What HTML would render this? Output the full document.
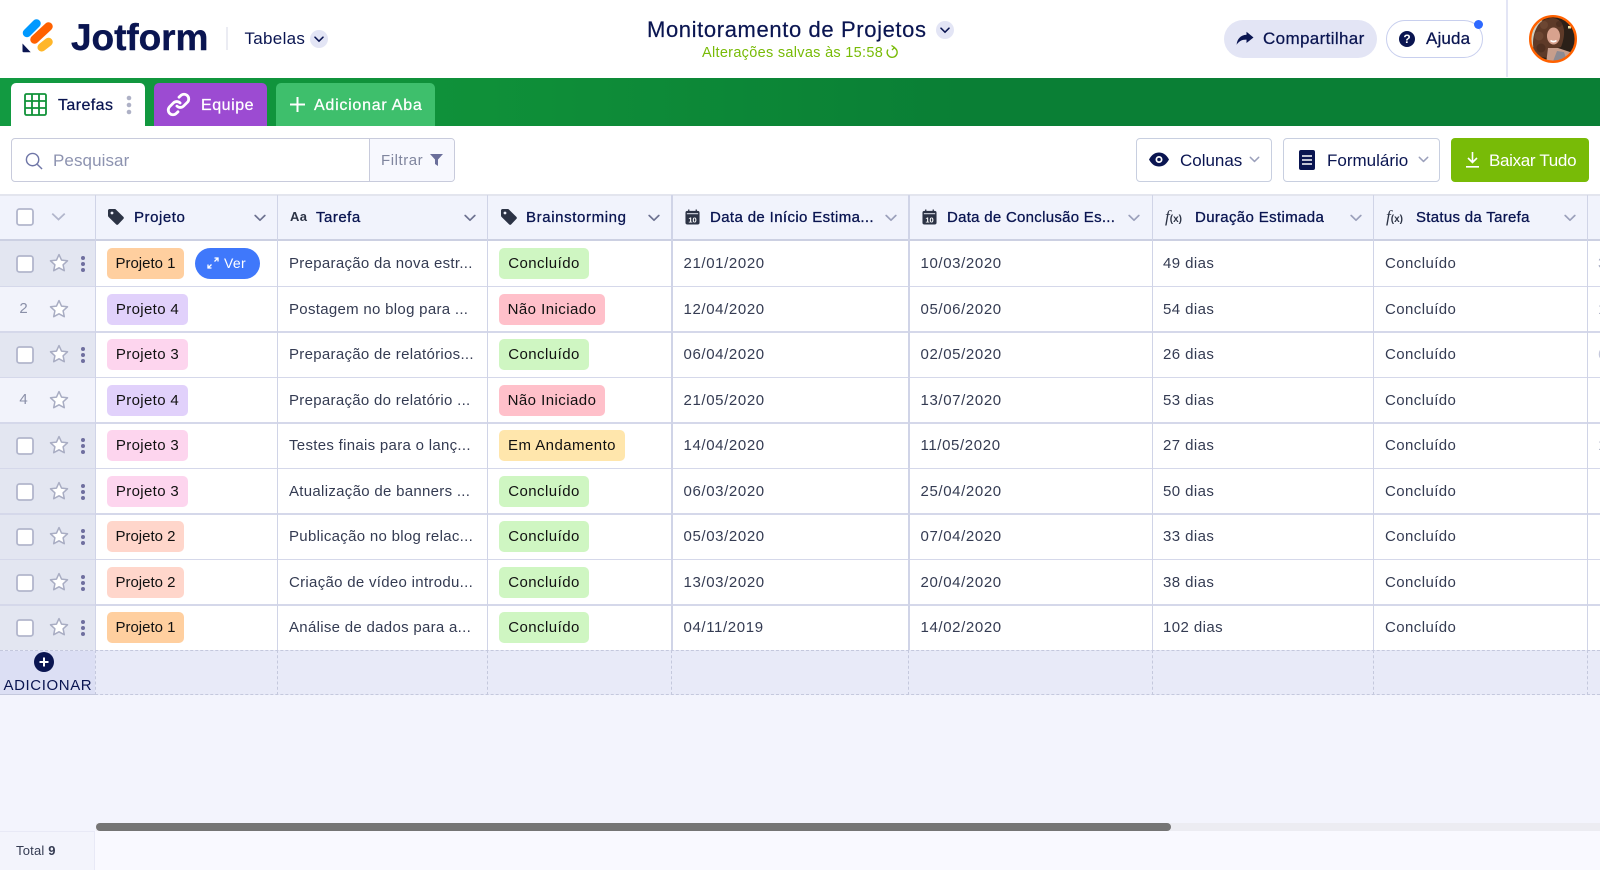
<!DOCTYPE html>
<html lang="pt"><head><meta charset="utf-8"><title>Monitoramento de Projetos</title>
<style>
html,body{margin:0;padding:0;width:1600px;height:870px;overflow:hidden;background:#f3f4fd;font-family:"Liberation Sans",sans-serif;color:#0a1551}
*{box-sizing:border-box}
.a,.t,.r,.r>*{position:absolute}
.t{white-space:nowrap;line-height:20px}
.m{-webkit-text-stroke:.25px currentColor}
.h{top:208px;font-size:15px;letter-spacing:.55px;-webkit-text-stroke:.3px #0a1551}
.r{left:0;width:1600px;height:46px;top:calc(241px + var(--i)*45.55px)}
.l{left:0;top:0;width:95px;height:46px;background:#e3e6f1}
.l.p{background:#f2f3fb}
.n{left:16px;top:12px;width:15px;font-size:15px;line-height:20px;color:#8a8fa8;text-align:center}
.tag{top:7px;height:31px;line-height:31px;border-radius:5px;font-size:15px;letter-spacing:.45px;color:#111;text-align:center;white-space:nowrap}
.c{top:13px;font-size:15px;line-height:20px;letter-spacing:.42px;color:#343b52;white-space:nowrap}
.x{left:289px;letter-spacing:.3px}
.y{letter-spacing:.62px}
.y1{left:683.500px}.y2{left:920.500px}
.p1{left:107px;width:77px;background:#ffcf9f;letter-spacing:0}.p2{left:107px;width:77px;background:#ffd6cb;letter-spacing:0}.p3{left:107px;width:81px;background:#fdd5ee;letter-spacing:.35px}.p4{left:107px;width:81px;background:#e1d1fb;letter-spacing:.35px}
.ok{left:499px;width:90px;background:#cff6c2}.no{left:499px;width:106px;background:#ffc0ca}.em{left:499px;width:126px;background:#ffe6ac}
.v{background:#d0d4e7;width:1.500px;top:195px;height:455px}
.hl{left:0;width:1600px;height:1.500px;background:#d5d8ea;top:calc(285.500px + var(--i)*45.55px)}
.d{top:650px;height:45px;border-left:1.500px dashed #c4c8dd;width:0}
</style></head><body>
<svg width="0" height="0" style="position:absolute"><defs>
<symbol id="star" viewBox="0 0 20 20"><path d="M10 1.600l2.500 5.500 6 .7-4.400 4 1.200 5.900L10 14.800l-5.300 2.900 1.200-5.900-4.400-4 6-.7z" fill="#fff" stroke="#a9adc3" stroke-width="1.500" stroke-linejoin="round"/></symbol>
<symbol id="box" viewBox="0 0 18 18"><rect x="1" y="1" width="16" height="16" rx="2.500" fill="#fff" stroke="#b2b6cc" stroke-width="1.800"/></symbol>
<symbol id="dots" viewBox="0 0 6 18"><g fill="#6f6f9f"><circle cx="3" cy="3" r="2"/><circle cx="3" cy="9" r="2"/><circle cx="3" cy="15" r="2"/></g></symbol>
<symbol id="chev" viewBox="0 0 12 8"><path d="M1.200 1.500L6 6.200l4.800-4.700" fill="none" stroke="#6c7190" stroke-width="1.700" stroke-linecap="round" stroke-linejoin="round"/></symbol>
<symbol id="chevl" viewBox="0 0 12 8"><path d="M1.200 1.500L6 6.200l4.800-4.700" fill="none" stroke="#9ba0bb" stroke-width="1.700" stroke-linecap="round" stroke-linejoin="round"/></symbol>
<symbol id="tagi" viewBox="0 0 16 16"><path d="M0 1.500C0 .7.7 0 1.500 0h5.200c.5 0 1 .2 1.300.6l7.400 7.300c.6.6.6 1.500 0 2l-5.200 5.500c-.6.6-1.500.6-2.100 0L.6 8C.2 7.600 0 7.100 0 6.600z" fill="#2c3345"/><circle cx="4" cy="4" r="1.400" fill="#f1f3fc"/></symbol>
<symbol id="cal" viewBox="0 0 16 16"><path d="M4 0v3M12 0v3" stroke="#2c3345" stroke-width="1.400"/><rect x="0.500" y="1.500" width="15" height="14.500" rx="2" fill="#2c3345"/><rect x="2" y="4" width="12" height="1" fill="#f1f3fc"/><text x="8" y="14" font-size="8" font-weight="700" text-anchor="middle" fill="#fff" font-family="Liberation Sans">10</text></symbol>
</defs></svg>

<!-- header -->
<div class="a" style="left:0;top:0;width:1600px;height:78px;background:#fff"></div>
<svg class="a" style="left:18px;top:16px" width="38" height="40" viewBox="18 16 38 40">
<path d="M27 33L36.500 23.500" stroke="#0099ff" stroke-width="8.500" stroke-linecap="round"/>
<path d="M34.500 39.500L48.500 26.500" stroke="#ff6100" stroke-width="8.500" stroke-linecap="round"/>
<path d="M41.700 47.300L48.500 42" stroke="#ffb629" stroke-width="8.500" stroke-linecap="round"/>
<path d="M22.500 43.500L30.700 52.300H23.500q-1 0-1-1z" fill="#0a1551"/></svg>
<div class="t" style="left:71px;top:16.500px;line-height:42px;font-size:37px;font-weight:700;color:#0a1551;letter-spacing:-.05px;-webkit-text-stroke:.4px #0a1551">Jotform</div>
<div class="a" style="left:226px;top:27px;width:1.500px;height:23px;background:#ebecf3"></div>
<div class="t" style="left:244.500px;top:29px;font-size:17px;letter-spacing:.3px">Tabelas</div>
<div class="a" style="left:310px;top:30px;width:18px;height:18px;border-radius:50%;background:#e3e5f5"></div>
<svg class="a" style="left:314px;top:36px" width="10" height="7"><path d="M1 1.200L5 5.200 9 1.200" fill="none" stroke="#0a1551" stroke-width="1.500" stroke-linecap="round"/></svg>

<div class="t" style="left:647px;top:18px;line-height:24px;font-size:22px;letter-spacing:.62px;-webkit-text-stroke:.2px #0a1551">Monitoramento de Projetos</div>
<div class="a" style="left:936px;top:21px;width:18px;height:18px;border-radius:50%;background:#e3e5f5"></div>
<svg class="a" style="left:940px;top:27px" width="10" height="7"><path d="M1 1.200L5 5.200 9 1.200" fill="none" stroke="#0a1551" stroke-width="1.500" stroke-linecap="round"/></svg>
<div class="t" style="left:702px;top:43px;font-size:14.500px;letter-spacing:.3px;color:#78bb07">Alterações salvas às 15:58</div>
<svg class="a" style="left:885px;top:45px" width="14" height="15" viewBox="0 0 14 15"><path d="M8.500 2.500A5 5 0 1 1 3 4.500" fill="none" stroke="#78bb07" stroke-width="1.400"/><path d="M6.500 .5L9.500 2.500 7 5" fill="none" stroke="#78bb07" stroke-width="1.300"/></svg>

<div class="a" style="left:1224px;top:20px;width:153px;height:38px;border-radius:19px;background:#e3e5f5"></div>
<svg class="a" style="left:1236px;top:31px" width="18" height="15" viewBox="0 0 18 15"><path d="M10.500 .8L17.500 6.500 10.500 12V8.600C6 8.500 3 10 .6 13.800 1.200 8 4.500 4.200 10.500 3.800z" fill="#0a1551"/></svg>
<div class="t m" style="left:1263px;top:29px;font-size:17px;letter-spacing:.36px">Compartilhar</div>
<div class="a" style="left:1386px;top:20px;width:97px;height:38px;border-radius:19px;background:#fff;border:1.500px solid #c8cfee"></div>
<div class="a" style="left:1399px;top:31px;width:16px;height:16px;border-radius:50%;background:#0a1551;color:#fff;font-size:12px;line-height:16px;font-weight:700;text-align:center">?</div>
<div class="t m" style="left:1426px;top:29px;font-size:17px;letter-spacing:.15px">Ajuda</div>
<div class="a" style="left:1474px;top:20px;width:9px;height:9px;border-radius:50%;background:#2e69ff"></div>
<div class="a" style="left:1506px;top:0;width:1.500px;height:77px;background:#e3e5f5"></div>
<svg class="a" style="left:1528px;top:14px" width="50" height="50" viewBox="0 0 50 50">
<defs><clipPath id="av"><circle cx="25" cy="25" r="22"/></clipPath></defs>
<circle cx="25" cy="25" r="22.500" fill="#2b2018"/>
<g clip-path="url(#av)"><path d="M0 0h16L8 30 0 40z" fill="#cfcfbf"/>
<path d="M8 42C3 32 5 20 9 13c3-6 9-9 15-9 7 0 11 5 12 12 .5 6-1 12-3 17l-8 2-6 9z" fill="#5e3a28"/>
<circle cx="11" cy="22" r="4.500" fill="#6c4632"/><circle cx="13" cy="34" r="4.500" fill="#4e2f20"/><circle cx="16" cy="11" r="4" fill="#6c4632"/><circle cx="31" cy="10" r="3" fill="#4e2f20"/>
<ellipse cx="25.500" cy="22" rx="6.500" ry="8.500" fill="#d8a28e"/>
<path d="M22.500 26.500c2 1.500 4 1.500 6 0" stroke="#fff" stroke-width="1.600" fill="none"/>
<path d="M20 34h10l12 4 6 12H18z" fill="#c79e8c"/><path d="M24 50l5-13 7 1 4 12z" fill="#8d8a92"/><rect x="40" y="12" width="3" height="2.500" fill="#eee3a8"/></g>
<circle cx="25" cy="25" r="22.800" fill="none" stroke="#ff6100" stroke-width="2.400"/></svg>

<!-- green bar -->
<div class="a" style="left:0;top:78px;width:1600px;height:48px;background:linear-gradient(90deg,#129a41 0,#0f9039 30%,#0a7f35 60%,#0a7f35 100%)"></div>
<div class="a" style="left:11px;top:83px;width:134px;height:43px;background:#fff;border-radius:5px 5px 0 0"></div>
<svg class="a" style="left:24px;top:93px" width="23" height="23" viewBox="0 0 23 23"><rect x="1" y="1" width="21" height="21" rx="1.500" fill="#fff" stroke="#109238" stroke-width="1.800"/><path d="M1 8h21M1 15h21M8 1v21M15 1v21" stroke="#109238" stroke-width="1.800"/></svg>
<div class="t m" style="left:58px;top:96px;font-size:16px;letter-spacing:.42px">Tarefas</div>
<svg class="a" style="left:126px;top:95px" width="6" height="20" viewBox="0 0 6 20"><g fill="#aeb1c6"><circle cx="3" cy="3" r="2.300"/><circle cx="3" cy="10" r="2.300"/><circle cx="3" cy="17" r="2.300"/></g></svg>
<div class="a" style="left:154px;top:83px;width:113px;height:43px;background:#9c4bd2;border-radius:5px 5px 0 0"></div>
<svg class="a" style="left:166px;top:92px" width="25" height="25" viewBox="0 0 24 24"><path d="M10.500 13.500a4.500 4.500 0 0 0 6.400 0l3.600-3.600a4.500 4.500 0 0 0-6.400-6.400L12.500 5M13.500 10.500a4.500 4.500 0 0 0-6.400 0l-3.600 3.600a4.500 4.500 0 0 0 6.400 6.400l1.600-1.500" fill="none" stroke="#fff" stroke-width="2.700" stroke-linecap="round"/></svg>
<div class="t m" style="left:201px;top:96px;font-size:16px;letter-spacing:.55px;color:#fff">Equipe</div>
<div class="a" style="left:276px;top:83px;width:159px;height:43px;background:#3ebf6c;border-radius:5px 5px 0 0"></div>
<svg class="a" style="left:290px;top:97px" width="15" height="15"><path d="M7.500 0v15M0 7.500h15" stroke="#fff" stroke-width="2"/></svg>
<div class="t m" style="left:314px;top:96px;font-size:16px;letter-spacing:.75px;color:#fff">Adicionar Aba</div>

<!-- toolbar -->
<div class="a" style="left:0;top:126px;width:1600px;height:68px;background:#fff"></div>
<div class="a" style="left:11px;top:138px;width:444px;height:44px;background:#fff;border:1.500px solid #c8cbdc;border-radius:4px;overflow:hidden"><div class="a" style="left:357px;top:0;width:86px;height:42px;background:#f7f8fe;border-left:1.500px solid #c8cbdc"></div></div>
<svg class="a" style="left:25px;top:152px" width="18" height="18" viewBox="0 0 19 19"><circle cx="8" cy="8" r="6.500" fill="none" stroke="#6f76a7" stroke-width="1.500"/><path d="M13 13l5 5" stroke="#6f76a7" stroke-width="1.500"/></svg>
<div class="t" style="left:53px;top:151px;font-size:17px;letter-spacing:.08px;color:#8d93b0">Pesquisar</div>
<div class="t" style="left:381px;top:151px;font-size:15px;letter-spacing:.55px;color:#80869f">Filtrar</div>
<svg class="a" style="left:430px;top:154px" width="13" height="12" viewBox="0 0 13 12"><path d="M0 0h13L8 5.500V12L5 10V5.500z" fill="#6b6f9b"/></svg>

<div class="a" style="left:1136px;top:138px;width:136px;height:44px;background:#fff;border:1.500px solid #c8cfe0;border-radius:4px"></div>
<svg class="a" style="left:1149px;top:152px" width="20" height="15" viewBox="0 0 20 15"><path d="M0 7.500C3 2 6.500 .5 10 .5s7 1.500 10 7c-3 5.500-6.500 7-10 7s-7-1.500-10-7z" fill="#0a1551"/><circle cx="10" cy="7.500" r="3.500" fill="#fff"/><circle cx="10" cy="7.500" r="1.800" fill="#0a1551"/></svg>
<div class="t" style="left:1180px;top:151px;font-size:17px;letter-spacing:-.02px">Colunas</div>
<svg class="a" style="left:1249px;top:156px" width="11" height="7"><use href="#chevl"/></svg>
<div class="a" style="left:1283px;top:138px;width:157px;height:44px;background:#fff;border:1.500px solid #c8cfe0;border-radius:4px"></div>
<svg class="a" style="left:1299px;top:150px" width="16" height="20" viewBox="0 0 16 20"><rect width="16" height="20" rx="2" fill="#0a1551"/><path d="M3 6h10M3 10h10M3 14h10" stroke="#fff" stroke-width="1.600"/></svg>
<div class="t" style="left:1327px;top:151px;font-size:17px;letter-spacing:0">Formulário</div>
<svg class="a" style="left:1417.500px;top:156px" width="11" height="7"><use href="#chevl"/></svg>
<div class="a" style="left:1451px;top:138px;width:138px;height:44px;background:#78bb07;border-radius:4px"></div>
<svg class="a" style="left:1466px;top:152px" width="13" height="16" viewBox="0 0 13 16"><path d="M6.500 0v10M2 6l4.500 4.500L11 6M0 14.800h13" fill="none" stroke="#fff" stroke-width="1.600"/></svg>
<div class="t" style="left:1489px;top:151px;font-size:17px;letter-spacing:-.32px;color:#fff">Baixar Tudo</div>

<!-- table header -->
<div class="a" style="left:0;top:194px;width:1600px;height:47px;background:#f1f3fc;border-top:2px solid #e3e5ee;border-bottom:2px solid #ccd0e2"></div>
<svg class="a" style="left:16px;top:208px" width="18" height="18"><use href="#box"/></svg>
<svg class="a" style="left:50px;top:212px" width="17" height="10" viewBox="0 0 12 8"><path d="M1 1.300L6 6l5-4.700" fill="none" stroke="#b2b6cc" stroke-width="1.400"/></svg>
<svg class="a" style="left:108px;top:209px" width="16" height="16"><use href="#tagi"/></svg>
<div class="t h" style="left:134px">Projeto</div>
<svg class="a" style="left:254px;top:214px" width="12" height="8"><use href="#chev"/></svg>
<div class="t" style="left:290px;top:207px;font-size:13px;font-weight:700;color:#2c3345;letter-spacing:.3px">Aa</div>
<div class="t h" style="left:316px;letter-spacing:.5px">Tarefa</div>
<svg class="a" style="left:464px;top:214px" width="12" height="8"><use href="#chev"/></svg>
<svg class="a" style="left:501px;top:209px" width="16" height="16"><use href="#tagi"/></svg>
<div class="t h" style="left:526px;letter-spacing:.62px">Brainstorming</div>
<svg class="a" style="left:648px;top:214px" width="12" height="8"><use href="#chev"/></svg>
<svg class="a" style="left:685px;top:209px" width="15" height="16"><use href="#cal"/></svg>
<div class="t h" style="left:710px;letter-spacing:.37px">Data de Início Estima...</div>
<svg class="a" style="left:885px;top:214px" width="12" height="8"><use href="#chevl"/></svg>
<svg class="a" style="left:922px;top:209px" width="15" height="16"><use href="#cal"/></svg>
<div class="t h" style="left:947px;letter-spacing:.28px">Data de Conclusão Es...</div>
<svg class="a" style="left:1128px;top:214px" width="12" height="8"><use href="#chevl"/></svg>
<div class="t" style="left:1165px;top:207px;font-size:17px;font-family:'Liberation Serif',serif;font-style:italic;color:#2c3345">f<span style="font-family:'Liberation Sans';font-style:normal;font-weight:700;font-size:10px">(x)</span></div>
<div class="t h" style="left:1195px;letter-spacing:.36px">Duração Estimada</div>
<svg class="a" style="left:1350px;top:214px" width="12" height="8"><use href="#chevl"/></svg>
<div class="t" style="left:1386px;top:207px;font-size:17px;font-family:'Liberation Serif',serif;font-style:italic;color:#2c3345">f<span style="font-family:'Liberation Sans';font-style:normal;font-weight:700;font-size:10px">(x)</span></div>
<div class="t h" style="left:1416px;letter-spacing:.3px">Status da Tarefa</div>
<svg class="a" style="left:1564px;top:214px" width="12" height="8"><use href="#chevl"/></svg>

<!-- rows -->
<div class="a" style="left:0;top:241px;width:1600px;height:409px;background:#fff"></div>
<div class="r" style="--i:0"><div class="l"></div><svg style="left:16px;top:14px" width="18" height="18"><use href="#box"/></svg><svg style="left:49px;top:12px" width="20" height="20"><use href="#star"/></svg><svg style="left:80px;top:14px" width="6" height="18"><use href="#dots"/></svg>
<div class="tag p1">Projeto 1</div><div class="a" style="left:195px;top:6.500px;width:65px;height:31px;border-radius:16px;background:#3f78fb"></div><svg style="left:207px;top:16px" width="12" height="12" viewBox="0 0 12 12"><path d="M1 11l3.500-3.500M11 1L7.500 4.500M1 7.500V11h3.500M7.500 1H11v3.500" fill="none" stroke="#fff" stroke-width="1.300"/></svg><div class="c" style="left:224px;top:12px;color:#fff;font-size:14px;letter-spacing:.3px">Ver</div>
<div class="c x">Preparação da nova estr...</div><div class="tag ok">Concluído</div><div class="c y y1">21/01/2020</div><div class="c y y2">10/03/2020</div><div class="c" style="left:1163px">49 dias</div><div class="c" style="left:1385px">Concluído</div><div class="c" style="left:1598px;color:#a9adc3">3</div></div>
<div class="r" style="--i:1"><div class="l p"></div><div class="n">2</div><svg style="left:49px;top:12px" width="20" height="20"><use href="#star"/></svg>
<div class="tag p4">Projeto 4</div><div class="c x">Postagem no blog para ...</div><div class="tag no">Não Iniciado</div><div class="c y y1">12/04/2020</div><div class="c y y2">05/06/2020</div><div class="c" style="left:1163px">54 dias</div><div class="c" style="left:1385px">Concluído</div><div class="c" style="left:1598px;color:#a9adc3">1</div></div>
<div class="r" style="--i:2"><div class="l"></div><svg style="left:16px;top:14px" width="18" height="18"><use href="#box"/></svg><svg style="left:49px;top:12px" width="20" height="20"><use href="#star"/></svg><svg style="left:80px;top:14px" width="6" height="18"><use href="#dots"/></svg>
<div class="tag p3">Projeto 3</div><div class="c x">Preparação de relatórios...</div><div class="tag ok">Concluído</div><div class="c y y1">06/04/2020</div><div class="c y y2">02/05/2020</div><div class="c" style="left:1163px">26 dias</div><div class="c" style="left:1385px">Concluído</div><div class="c" style="left:1598px;color:#c5c8dc">6</div></div>
<div class="r" style="--i:3"><div class="l p"></div><div class="n">4</div><svg style="left:49px;top:12px" width="20" height="20"><use href="#star"/></svg>
<div class="tag p4">Projeto 4</div><div class="c x">Preparação do relatório ...</div><div class="tag no">Não Iniciado</div><div class="c y y1">21/05/2020</div><div class="c y y2">13/07/2020</div><div class="c" style="left:1163px">53 dias</div><div class="c" style="left:1385px">Concluído</div></div>
<div class="r" style="--i:4"><div class="l"></div><svg style="left:16px;top:14px" width="18" height="18"><use href="#box"/></svg><svg style="left:49px;top:12px" width="20" height="20"><use href="#star"/></svg><svg style="left:80px;top:14px" width="6" height="18"><use href="#dots"/></svg>
<div class="tag p3">Projeto 3</div><div class="c x">Testes finais para o lanç...</div><div class="tag em">Em Andamento</div><div class="c y y1">14/04/2020</div><div class="c y y2">11/05/2020</div><div class="c" style="left:1163px">27 dias</div><div class="c" style="left:1385px">Concluído</div><div class="c" style="left:1598px;color:#a9adc3">1</div></div>
<div class="r" style="--i:5"><div class="l"></div><svg style="left:16px;top:14px" width="18" height="18"><use href="#box"/></svg><svg style="left:49px;top:12px" width="20" height="20"><use href="#star"/></svg><svg style="left:80px;top:14px" width="6" height="18"><use href="#dots"/></svg>
<div class="tag p3">Projeto 3</div><div class="c x">Atualização de banners ...</div><div class="tag ok">Concluído</div><div class="c y y1">06/03/2020</div><div class="c y y2">25/04/2020</div><div class="c" style="left:1163px">50 dias</div><div class="c" style="left:1385px">Concluído</div></div>
<div class="r" style="--i:6"><div class="l"></div><svg style="left:16px;top:14px" width="18" height="18"><use href="#box"/></svg><svg style="left:49px;top:12px" width="20" height="20"><use href="#star"/></svg><svg style="left:80px;top:14px" width="6" height="18"><use href="#dots"/></svg>
<div class="tag p2">Projeto 2</div><div class="c x">Publicação no blog relac...</div><div class="tag ok">Concluído</div><div class="c y y1">05/03/2020</div><div class="c y y2">07/04/2020</div><div class="c" style="left:1163px">33 dias</div><div class="c" style="left:1385px">Concluído</div></div>
<div class="r" style="--i:7"><div class="l"></div><svg style="left:16px;top:14px" width="18" height="18"><use href="#box"/></svg><svg style="left:49px;top:12px" width="20" height="20"><use href="#star"/></svg><svg style="left:80px;top:14px" width="6" height="18"><use href="#dots"/></svg>
<div class="tag p2">Projeto 2</div><div class="c x">Criação de vídeo introdu...</div><div class="tag ok">Concluído</div><div class="c y y1">13/03/2020</div><div class="c y y2">20/04/2020</div><div class="c" style="left:1163px">38 dias</div><div class="c" style="left:1385px">Concluído</div></div>
<div class="r" style="--i:8"><div class="l"></div><svg style="left:16px;top:14px" width="18" height="18"><use href="#box"/></svg><svg style="left:49px;top:12px" width="20" height="20"><use href="#star"/></svg><svg style="left:80px;top:14px" width="6" height="18"><use href="#dots"/></svg>
<div class="tag p1">Projeto 1</div><div class="c x">Análise de dados para a...</div><div class="tag ok">Concluído</div><div class="c y y1">04/11/2019</div><div class="c y y2">14/02/2020</div><div class="c" style="left:1163px">102 dias</div><div class="c" style="left:1385px">Concluído</div></div>

<!-- horizontal lines -->
<div class="a hl" style="--i:0"></div><div class="a hl" style="--i:1"></div><div class="a hl" style="--i:2"></div><div class="a hl" style="--i:3"></div><div class="a hl" style="--i:4"></div><div class="a hl" style="--i:5"></div><div class="a hl" style="--i:6"></div><div class="a hl" style="--i:7"></div>

<!-- vertical lines -->
<div class="a v" style="left:94.500px"></div><div class="a v" style="left:276.500px"></div><div class="a v" style="left:486.500px"></div><div class="a v" style="left:671px"></div><div class="a v" style="left:908px"></div><div class="a v" style="left:1151.500px"></div><div class="a v" style="left:1372.500px"></div><div class="a v" style="left:1586.500px"></div>

<!-- add row -->
<div class="a" style="left:0;top:650px;width:1600px;height:45px;background:#e8eaf8;border-bottom:1.500px dashed #c4c8dd;border-top:1.500px dashed #c4c8dd"></div>
<div class="a" style="left:0;top:651px;width:95px;height:44px;background:#dcdff4;border-bottom:1.500px solid #c4c8dd"></div>
<div class="a d" style="left:95px"></div><div class="a d" style="left:277px"></div><div class="a d" style="left:487px"></div><div class="a d" style="left:671px"></div><div class="a d" style="left:908px"></div><div class="a d" style="left:1152px"></div><div class="a d" style="left:1373px"></div><div class="a d" style="left:1587px"></div>
<svg class="a" style="left:34px;top:652px" width="20" height="20"><circle cx="10" cy="10" r="10" fill="#0a1551"/><path d="M10 5.500v9M5.500 10h9" stroke="#fff" stroke-width="2"/></svg>
<div class="t" style="left:3.500px;top:675.500px;font-size:15px;letter-spacing:.6px;color:#0a1551">ADICIONAR</div>

<!-- scrollbar and footer -->
<div class="a" style="left:96px;top:823px;width:1504px;height:8px;background:#ececf2"></div>
<div class="a" style="left:96px;top:823px;width:1075px;height:8px;background:#757575;border-radius:4px"></div>
<div class="a" style="left:0;top:831px;width:1600px;height:39px;background:#f9f9ff"></div>
<div class="a" style="left:0;top:831px;width:95px;height:39px;background:#f3f4fc;border-top:1px solid #e8e9f6;border-right:1.500px solid #e8e9f6"></div>
<div class="t" style="left:16px;top:841px;font-size:13px;letter-spacing:.2px;color:#343b52">Total <b>9</b></div>
</body></html>
